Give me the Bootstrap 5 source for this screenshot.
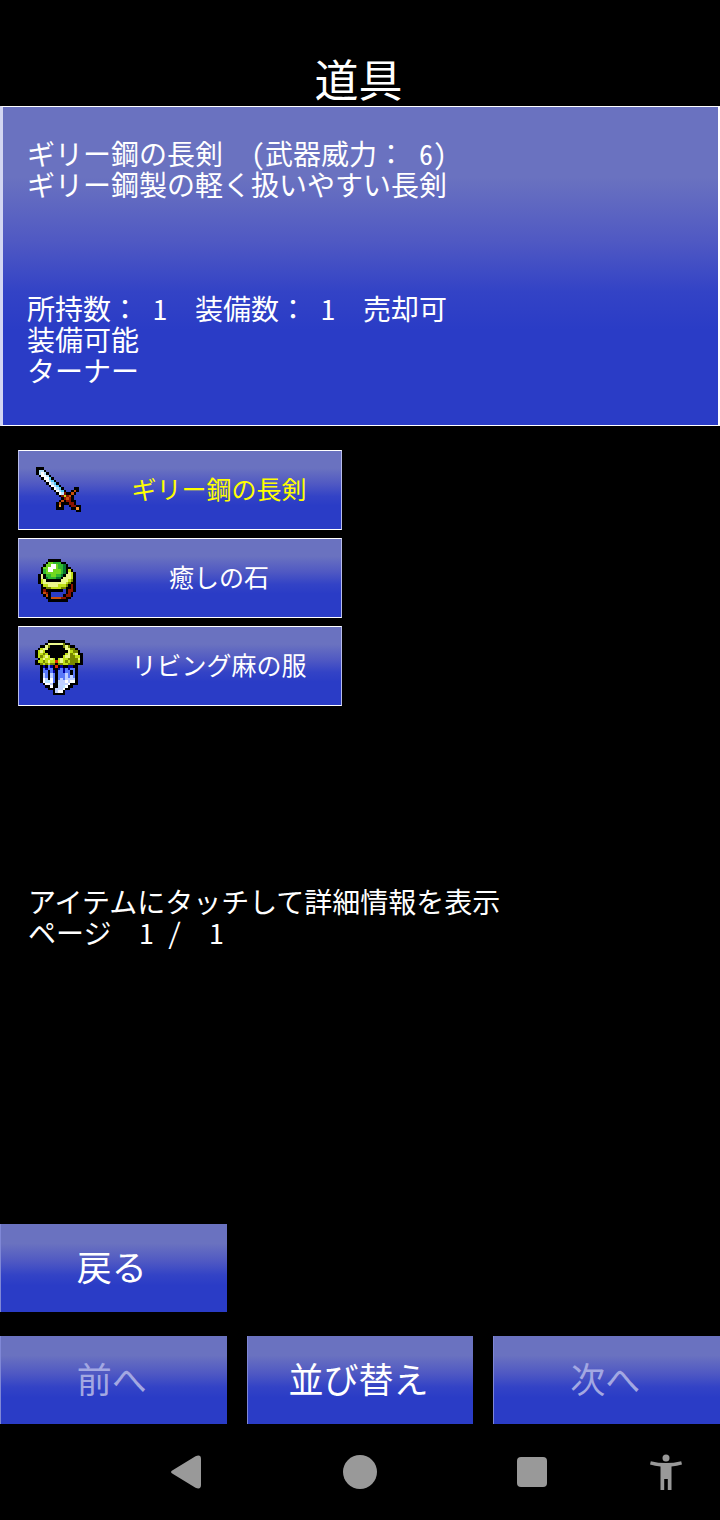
<!DOCTYPE html>
<html lang="ja">
<head>
<meta charset="utf-8">
<meta name="viewport" content="width=device-width, initial-scale=1">
<title>道具</title>
<link href="https://cdn.jsdelivr.net/npm/bootstrap@5.3.0/dist/css/bootstrap.min.css" rel="stylesheet">
<style>
  body { background: #000; color: #fff; font-family: "Noto Sans CJK JP", sans-serif; font-feature-settings: "hwid"; }
  .screen-title { font-size: 44px; line-height: 50px; padding: 53px 3px 3px 0; font-weight: 400; }
  .blue-fill { background: linear-gradient(#6a72c0 0%, #6a72c0 22%, #5059c3 42%, #3343c6 58%, #2a3cc6 70%, #2a3cc6 100%); }
  .info-panel { border: 1px solid #fff; border-left: 3px solid #d3d6f2; border-right-width: 2px; min-height: 320px; padding: 31px 24px; }
  .body-text { font-size: 28px; line-height: 31px; white-space: pre-wrap; }
  .full-width { font-feature-settings: normal; }
  .info-gap { margin-top: 93px; }
  .item-grid { display: grid; grid-template-columns: 1fr 1fr; grid-template-rows: repeat(5, 80px); gap: 8px 36px; padding: 24px 18px 0; }
  .game-btn { color: #fff; border-radius: 0; border: 0; }
  .game-btn:hover, .game-btn:active { color: #ff0; }
  .item-btn { border: 1px solid #fff; border-left-color: #b7bbea; border-right-color: #b7bbea; grid-column: 1; font-size: 25px; line-height: 32px; padding: 0 1px 0 9px; }
  .item-btn.active-item { color: #ff0; }
  .item-label { padding: 0 0 4px 10px; }
  .sprite { width: 60px; height: 60px; }
  .hint { padding: 4px 28px 0; }
  .command-grid { display: grid; grid-template-columns: repeat(3, minmax(0, 1fr)); gap: 24px 20px; }
  .command-btn { height: 88px; font-size: 35px; line-height: 44px; padding: 0 4px 4px 0; border-left: 1px solid #7f87d6; }
  .command-btn:disabled { color: #a3a8e2; opacity: 1; border-color: #7f87d6; }
  .system-bar { display: grid; grid-template-columns: 102fr 172fr 172fr 172fr 96fr 6fr; height: 96px; }
  .system-bar .btn { border: 0; padding: 0; line-height: 0; }
  .system-bar svg { width: 40px; height: 40px; fill: #999; }
</style>
</head>
<body>
<div class="d-flex flex-column min-vh-100">
  <h1 class="screen-title text-center m-0">道具</h1>

  <section class="info-panel blue-fill">
    <p class="body-text mb-0">ギリー鋼の長剣  (武器威力<span class="full-width">：</span> 6)
ギリー鋼製の軽く扱いやすい長剣</p>
    <p class="body-text info-gap mb-0">所持数<span class="full-width">：</span> 1  装備数<span class="full-width">：</span> 1  売却可
装備可能
ターナー</p>
  </section>

  <main class="item-grid">
    <button type="button" class="btn game-btn item-btn active-item blue-fill d-flex align-items-center">
      <svg class="sprite flex-shrink-0" data-sprite="sword" viewBox="0 0 60 60" aria-hidden="true"></svg>
      <span class="item-label flex-grow-1">ギリー鋼の長剣</span>
    </button>
    <button type="button" class="btn game-btn item-btn blue-fill d-flex align-items-center">
      <svg class="sprite flex-shrink-0" data-sprite="ring" viewBox="0 0 60 60" aria-hidden="true"></svg>
      <span class="item-label flex-grow-1">癒しの石</span>
    </button>
    <button type="button" class="btn game-btn item-btn blue-fill d-flex align-items-center">
      <svg class="sprite flex-shrink-0" data-sprite="robe" viewBox="0 0 60 60" aria-hidden="true"></svg>
      <span class="item-label flex-grow-1">リビング麻の服</span>
    </button>
  </main>

  <p class="hint body-text mb-0">アイテムにタッチして詳細情報を表示
ページ  1 /  1</p>

  <div class="mt-auto">
    <div class="command-grid">
      <button type="button" class="btn game-btn command-btn blue-fill">戻る</button>
      <span></span><span></span>
      <button type="button" class="btn game-btn command-btn blue-fill" disabled>前へ</button>
      <button type="button" class="btn game-btn command-btn blue-fill">並び替え</button>
      <button type="button" class="btn game-btn command-btn blue-fill" disabled>次へ</button>
    </div>
    <nav class="system-bar align-items-center" aria-label="システム">
      <span></span>
      <button type="button" class="btn" aria-label="戻る"><svg viewBox="0 0 40 40"><path d="M5 18 27.500 4.200Q33 2 33 7V33Q33 38 27.500 35.800L5 22Q1 20 5 18Z"/></svg></button>
      <button type="button" class="btn" aria-label="ホーム"><svg viewBox="0 0 40 40"><circle cx="20" cy="20" r="17"/></svg></button>
      <button type="button" class="btn" aria-label="履歴"><svg viewBox="0 0 40 40"><rect x="5" y="5" width="30" height="30" rx="4"/></svg></button>
      <button type="button" class="btn" aria-label="ユーザー補助"><svg viewBox="0 0 40 40"><circle cx="20" cy="6" r="3.500"/><path d="M4.800 9.200Q20 13 35.200 9.200L36 12.500Q31 14 25.500 14.500V38H21.800V27H18.200V38H14.500V14.500Q9 14 4 12.500Z"/></svg></button>
    </nav>
  </div>
</div>

<script src="https://cdn.jsdelivr.net/npm/bootstrap@5.3.0/dist/js/bootstrap.bundle.min.js"></script>
<script>
  // Item sprites: one letter per dot, coloured through the palette.
  const palette = {
    K: '#000', W: '#fff', L: '#b8e4ff', C: '#58c8f8', R: '#8c1400', O: '#c8500c', P: '#f89830',
    Y: '#ecf88c', y: '#c0e018', o: '#788800', G: '#30b830', g: '#70d820', D: '#087830',
    N: '#0000a0', b: '#5878f8', l: '#c0d0ff', F: '#e02800'
  };
  const sprites = {
    sword: { x: 8, y: 7, rows: [
      'KKK...............',
      'KLLK..............',
      'KLWLK.............',
      '.KWWLK............',
      '..KWWCK...........',
      '...KWLCK..........',
      '....KWLCK.........',
      '.....KWLCK........',
      '......KWLCK....KK.',
      '.......KWLCK..KOK.',
      '........KWLRKKOK..',
      '.........KRyROK...',
      '..........KRORK...',
      '.........KOKRRKK..',
      '........KOKKKRRK..',
      '........KPK..KRRKK',
      '........KKK...KKPK',
      '................KK'] },
    ring: { x: 10, y: 11, rows: [
      '....KKKKK......',
      '...KggGGGKK....',
      '..KggWWgGGDK...',
      '.KggWWWgGGDKK..',
      '.KGgWWgggGDKyK.',
      '.KGggggggGDKYyK',
      'KYKGGggGGDKYYyK',
      'KYKDGGGDDKYYYyK',
      'KyYKKKKKKYYYyoK',
      'KyYYYYYYYYYyoKK',
      '.KyyYYYYyyyoKRK',
      '.KKooyyyyooKKRK',
      '.KRKKKKKKK.KRRK',
      '.KORK......KRK.',
      '..KOK.....KRRK.',
      '...KKOOOORRKK..',
      '....KKKKKKKK...'] },
    robe: { x: 7, y: 4, rows: [
      '.....KKKKKKK.......',
      '....KYYYYYYoKK.....',
      '..KKYoKKKKKoYoKK...',
      '.KyYYKKKKKKKYYooK..',
      'KyYyKKKKKKKKKYyooK.',
      'KyyoyKKKKKKKyYoyYKK',
      'KyoyYyKKKKKyYYooyyK',
      '.KyYyyYyKyYyyooooYK',
      'KyyoyYyyFyYyoyoooyK',
      'KKoyoyooKooyyoooKKK',
      '..KNKbNKFKNKKNNKK..',
      '..KbNbbKKNbNbNbbK..',
      '..KbbKbNKbbNbbKbK..',
      '..KlbKlbKbbblbKbK..',
      '..KlbKlbKbbblblbK..',
      '..KWlKWbKblbllllK..',
      '..KWLLWbKlllWlWWK..',
      '...KWWlKKLlllWKKK..',
      '....KKWKKllLWKK....',
      '.....KKKlllWKK.....',
      '.......KlWWK.......',
      '.......KKKKK.......'] }
  };
  const dot = 2.5;
  document.querySelectorAll('[data-sprite]').forEach(svg => {
    const sprite = sprites[svg.dataset.sprite];
    const group = document.createElementNS('http://www.w3.org/2000/svg', 'g');
    group.setAttribute('shape-rendering', 'crispEdges');
    sprite.rows.forEach((row, r) => [...row].forEach((key, c) => {
      if (!palette[key]) return;
      const rect = document.createElementNS('http://www.w3.org/2000/svg', 'rect');
      rect.setAttribute('x', sprite.x + c * dot);
      rect.setAttribute('y', sprite.y + r * dot);
      rect.setAttribute('width', dot);
      rect.setAttribute('height', dot);
      rect.setAttribute('fill', palette[key]);
      group.append(rect);
    }));
    svg.append(group);
  });
</script>
</body>
</html>
